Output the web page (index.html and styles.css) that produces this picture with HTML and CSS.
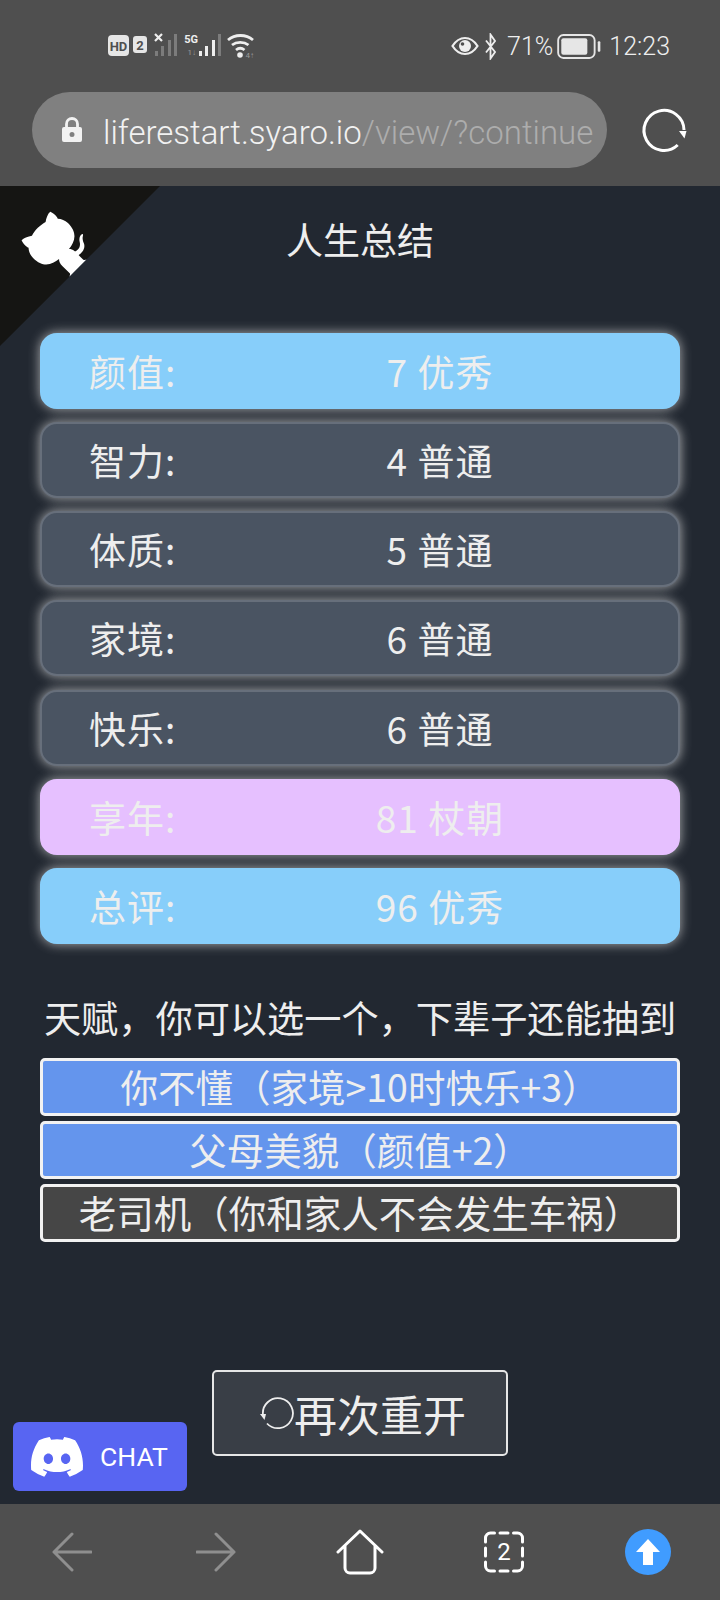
FILE: index.html
```html
<!DOCTYPE html>
<html>
<head>
    <meta name="viewport" content="width=device-width, initial-scale=1">
    <title>人生重开模拟器</title>
    <link rel="stylesheet" href="styles.css">
</head>
<body>
    <header class="browser-top">
        <div class="status-bar">
            <svg class="status-left" width="150" height="30" viewBox="0 0 150 30">
                <rect x="0" y="4" width="21" height="21" rx="4" fill="#e6e6e6"/>
                <text x="10.5" y="19.5" class="st-text hd">HD</text>
                <rect x="25" y="5" width="14" height="17" rx="3" fill="#e6e6e6"/>
                <text x="32" y="18.5" class="st-text hd">2</text>
                <path d="M47 3l7 7M54 3l-7 7" stroke="#eee" stroke-width="2.200"/>
                <g fill="#7c7c7c">
                    <rect x="47" y="20" width="3" height="5"/>
                    <rect x="53" y="15" width="3" height="10"/>
                    <rect x="60" y="9" width="3" height="16"/>
                    <rect x="66" y="3" width="3" height="22"/>
                </g>
                <text x="90" y="12" class="st-text fiveg">5G</text>
                <text x="88" y="24" class="st-text updown">1↓</text>
                <g fill="#eee">
                    <rect x="91" y="20" width="3" height="5"/>
                    <rect x="97" y="15" width="3" height="10"/>
                    <rect x="104" y="9" width="3" height="16"/>
                </g>
                <rect x="110" y="3" width="3" height="22" fill="#7c7c7c"/>
                <path d="M120 9c7-6 18-6 25 0M124 14c4.500-3.500 12-3.500 16.500 0M128 19c2.500-2 6-2 8.500 0" fill="none" stroke="#eee" stroke-width="2.800"/>
                <circle cx="132" cy="24" r="2.800" fill="#eee"/>
                <text x="146" y="27" class="st-text updown">4↑</text>
            </svg>
            <div class="status-right">
                <svg width="28" height="20" viewBox="0 0 28 20">
                    <path d="M1.500 10C5 4.500 9 2 14 2s9 2.500 12.500 8C23 15.500 19 18 14 18S5 15.500 1.500 10z" fill="none" stroke="#eee" stroke-width="2.200"/>
                    <circle cx="14" cy="10" r="6" fill="#eee"/>
                    <circle cx="11.500" cy="8" r="1.800" fill="#4f4f4f"/>
                </svg>
                <svg class="bt" width="11" height="27" viewBox="0 0 11 27">
                    <path d="M1 7.500l9 11.500-4.500 6.500V1.500L10 8 1 19.500" fill="none" stroke="#eee" stroke-width="1.800"/>
                </svg>
                <span class="pct">71%</span>
                <svg class="battery" width="44" height="25" viewBox="0 0 42 24">
                    <rect x="1" y="1" width="35" height="22" rx="5" fill="none" stroke="#e6e6e6" stroke-width="1.800"/>
                    <rect x="4" y="4" width="25" height="16" rx="2" fill="#e6e6e6"/>
                    <rect x="39" y="7" width="2.500" height="10" rx="1" fill="#e6e6e6"/>
                </svg>
                <span class="clock">12:23</span>
            </div>
        </div>
        <div class="url-row">
            <div class="url-pill">
                <svg width="22" height="28" viewBox="0 0 22 28">
                    <path d="M5.500 12V8a5.500 5.500 0 0 1 11 0v4" fill="none" stroke="#f2f2f2" stroke-width="2.800"/>
                    <path d="M3 11h16a2 2 0 0 1 2 2v11a2 2 0 0 1-2 2H3a2 2 0 0 1-2-2V13a2 2 0 0 1 2-2zm8 5a2.500 2.500 0 1 0 0 5 2.500 2.500 0 0 0 0-5z" fill="#f2f2f2" fill-rule="evenodd"/>
                </svg>
                <div class="url-text"><span class="url-host">liferestart.syaro.io</span><span class="url-path">/view/?continue</span></div>
            </div>
            <svg class="reload" width="48" height="48" viewBox="0 0 48 48">
                <path d="M37.700 39A20 20 0 1 1 44 24" fill="none" stroke="#fff" stroke-width="3"/>
                <path d="M39 25h7.500l-2 7.500z" fill="#fff"/>
            </svg>
        </div>
    </header>

    <main class="page">
        <a class="github-corner" href="#" aria-label="GitHub">
            <svg width="160" height="160" viewBox="0 0 250 250">
                <g transform="translate(250 0) scale(-1 1)">
                    <path d="M0,0 L115,115 L130,115 L142,142 L250,250 L250,0 Z" fill="#151513"/>
                    <path d="M128.3,109.0 C113.8,99.7 119.0,89.6 119.0,89.6 C122.0,82.7 120.5,78.6 120.5,78.6 C119.2,72.0 123.4,76.3 123.4,76.3 C127.3,80.9 125.5,87.3 125.5,87.3 C122.9,97.6 130.6,101.9 134.4,103.2" fill="#fff"/>
                    <path d="M115.0,115.0 C114.9,115.1 118.7,116.5 119.8,115.4 L133.7,101.6 C136.9,99.2 139.9,98.4 142.2,98.6 C133.8,88.0 127.5,74.4 143.8,58.0 C148.5,53.4 154.0,51.2 159.7,51.0 C160.3,49.4 163.2,43.6 171.4,40.1 C171.4,40.1 176.1,42.5 178.8,56.2 C183.1,58.6 187.2,61.8 190.9,65.4 C194.5,69.0 197.7,73.2 200.1,77.6 C213.8,80.2 216.3,84.9 216.3,84.9 C212.7,93.1 206.9,96.0 205.4,96.6 C205.1,102.4 203.0,107.8 198.3,112.5 C181.9,128.9 168.3,122.5 157.7,114.1 C157.9,116.9 156.7,120.9 152.7,124.9 L141.0,136.5 C139.8,137.7 141.6,141.9 141.8,141.8 Z" fill="#fff"/>
                </g>
            </svg>
        </a>

        <h1 class="title">人生总结</h1>

        <ul class="stats">
            <li class="stat stat-blue"><span class="stat-label">颜值:</span><span class="stat-value">7 优秀</span></li>
            <li class="stat"><span class="stat-label">智力:</span><span class="stat-value">4 普通</span></li>
            <li class="stat"><span class="stat-label">体质:</span><span class="stat-value">5 普通</span></li>
            <li class="stat"><span class="stat-label">家境:</span><span class="stat-value">6 普通</span></li>
            <li class="stat"><span class="stat-label">快乐:</span><span class="stat-value">6 普通</span></li>
            <li class="stat stat-pink"><span class="stat-label">享年:</span><span class="stat-value">81 杖朝</span></li>
            <li class="stat stat-blue"><span class="stat-label">总评:</span><span class="stat-value">96 优秀</span></li>
        </ul>

        <p class="talent-title">天赋，你可以选一个，下辈子还能抽到</p>

        <ul class="talents">
            <li class="talent talent-on">你不懂（家境&gt;10时快乐+3）</li>
            <li class="talent talent-on">父母美貌（颜值+2）</li>
            <li class="talent">老司机（你和家人不会发生车祸）</li>
        </ul>

        <button class="restart" type="button">
            <svg width="34" height="34" viewBox="0 0 34 34">
                <path d="M7 27.500A15 15 0 1 0 3 19" fill="none" stroke="#eee" stroke-width="1.800"/>
                <path d="M0 18h6l-1.500 6z" fill="#eee"/>
            </svg>
            <span>再次重开</span>
        </button>

        <a class="chat" href="#">
            <svg width="52" height="40" viewBox="0 0 16 12.300">
                <path transform="translate(0 -1.900)" fill="#fff" d="M13.545 2.907a13.227 13.227 0 0 0-3.257-1.011.05.05 0 0 0-.052.025c-.141.25-.297.577-.406.833a12.19 12.19 0 0 0-3.658 0 8.258 8.258 0 0 0-.412-.833.051.051 0 0 0-.052-.025c-1.125.194-2.22.534-3.257 1.011a.041.041 0 0 0-.021.018C.356 6.024-.213 9.047.066 12.032c.001.014.01.028.021.037a13.276 13.276 0 0 0 3.995 2.02.05.05 0 0 0 .056-.019c.308-.42.582-.863.818-1.329a.05.05 0 0 0-.01-.059.051.051 0 0 0-.018-.011 8.875 8.875 0 0 1-1.248-.595.05.05 0 0 1-.02-.066.051.051 0 0 1 .015-.019c.084-.063.168-.129.248-.195a.05.05 0 0 1 .051-.007c2.619 1.196 5.454 1.196 8.041 0a.052.052 0 0 1 .053.007c.08.066.164.132.248.195a.051.051 0 0 1-.004.085 8.254 8.254 0 0 1-1.249.594.05.05 0 0 0-.03.03.052.052 0 0 0 .003.041c.24.465.515.909.817 1.329a.05.05 0 0 0 .056.019 13.235 13.235 0 0 0 4.001-2.02.049.049 0 0 0 .021-.037c.334-3.451-.559-6.449-2.366-9.106a.034.034 0 0 0-.02-.019Zm-8.198 7.307c-.789 0-1.438-.724-1.438-1.612 0-.889.637-1.613 1.438-1.613.807 0 1.45.73 1.438 1.613 0 .888-.637 1.612-1.438 1.612Zm5.316 0c-.788 0-1.438-.724-1.438-1.612 0-.889.637-1.613 1.438-1.613.807 0 1.451.73 1.438 1.613 0 .888-.631 1.612-1.438 1.612Z"/>
            </svg>
            <span>CHAT</span>
        </a>
    </main>

    <nav class="bottom-nav">
        <svg width="40" height="40" viewBox="0 0 40 40">
            <path d="M20 2 2 20l18 18M2 20h37" fill="none" stroke="#8f8f8f" stroke-width="3" stroke-linecap="round" stroke-linejoin="round"/>
        </svg>
        <svg width="40" height="40" viewBox="0 0 40 40">
            <path d="M20 2l18 18-18 18M38 20H1" fill="none" stroke="#8f8f8f" stroke-width="3" stroke-linecap="round" stroke-linejoin="round"/>
        </svg>
        <svg width="48" height="46" viewBox="0 0 48 46">
            <path d="M2 23 24 2l22 21M9 17v22a5 5 0 0 0 5 5h20a5 5 0 0 0 5-5V17" fill="none" stroke="#fff" stroke-width="3" stroke-linecap="round" stroke-linejoin="round"/>
        </svg>
        <svg width="42" height="42" viewBox="0 0 42 42">
            <path d="M2.500 11V7a5 5 0 0 1 5-5h4M30.500 2h4a5 5 0 0 1 5 5v4M39.500 31v4a5 5 0 0 1-5 5h-4M11.500 40h-4a5 5 0 0 1-5-5v-4M17 2h8M17 40h8M2.500 17v8M39.500 17v8" fill="none" stroke="#fff" stroke-width="3" stroke-linecap="round"/>
            <text x="21" y="29" class="tab-count">2</text>
        </svg>
        <svg width="46" height="46" viewBox="0 0 46 46">
            <circle cx="23" cy="23" r="23" fill="#409cff"/>
            <path d="M23 10 35 23h-7v13H18V23h-7z" fill="#fff"/>
        </svg>
    </nav>
</body>
</html>
```

FILE: styles.css
```css
* {
    box-sizing: border-box;
}

body {
    margin: 0;
    width: 720px;
    height: 1600px;
    overflow: hidden;
    display: flex;
    flex-direction: column;
    background-color: #222831;
    color: #eeeeee;
    font-family: "Noto Sans CJK SC", "Noto Sans", sans-serif;
}

ul {
    list-style: none;
    margin: 0;
    padding: 0;
}

/* browser chrome */
.browser-top {
    height: 186px;
    background-color: #4f4f4f;
}

.status-bar {
    height: 92px;
    padding: 0 50px 0 108px;
    display: flex;
    justify-content: space-between;
    align-items: center;
}

.status-left {
    flex: none;
}

.st-text {
    font-family: Roboto, sans-serif;
    text-anchor: middle;
    fill: #eeeeee;
}

.st-text.hd {
    font-size: 13px;
    font-weight: 700;
    fill: #4f4f4f;
}

.st-text.fiveg {
    font-size: 11px;
    font-weight: 700;
    text-anchor: end;
}

.st-text.updown {
    font-size: 8px;
    text-anchor: end;
    fill: #9a9a9a;
}

.status-right {
    display: flex;
    align-items: center;
    font-family: Roboto, sans-serif;
    font-weight: 300;
    font-size: 25px;
    color: #eeeeee;
}

.bt {
    margin-left: 6px;
}

.pct {
    margin-left: 11px;
}

.battery {
    margin-left: 4px;
}

.clock {
    margin-left: 8px;
}

.url-row {
    display: flex;
    align-items: center;
    padding-left: 32px;
}

.url-pill {
    width: 575px;
    height: 76px;
    border-radius: 38px;
    background-color: #808080;
    padding: 0 10px 0 29px;
    display: flex;
    align-items: center;
    gap: 20px;
}

.url-pill svg {
    flex: none;
}

.url-text {
    padding-top: 4px;
    white-space: nowrap;
    overflow: hidden;
    font-family: Roboto, sans-serif;
    font-weight: 300;
    font-size: 33px;
}

.url-host {
    color: #f2f2f2;
}

.url-path {
    color: #adadad;
}

.reload {
    margin-left: 33px;
}

/* page */
.page {
    position: relative;
    height: 1318px;
    padding: 0 40px;
}

.github-corner {
    position: absolute;
    top: 0;
    left: 0;
    line-height: 0;
}

.title {
    margin: 0;
    height: 146.500px;
    padding-top: 23px;
    line-height: 60px;
    text-align: center;
    font-size: 37px;
    font-weight: 400;
}

.stats {
    display: flex;
    flex-direction: column;
    gap: 13.300px;
}

.stat {
    height: 76px;
    padding-left: 47px;
    border-radius: 17px;
    border: 2px solid rgba(255, 255, 255, 0.16);
    background-color: #4a5462;
    box-shadow: 0 0 12px rgba(220, 220, 220, 0.75);
    display: grid;
    grid-template-columns: 113px 1fr;
    align-items: center;
    font-size: 37px;
    letter-spacing: 1px;
    line-height: 50px;
}

.stat-value {
    text-align: center;
}

.stat-blue {
    background-color: #87cefa;
    border-color: #87cefa;
}

.stat-pink {
    background-color: #e6c0ff;
    border-color: #e6c0ff;
}

.talent-title {
    margin: 0;
    padding-top: 46.500px;
    height: 113.500px;
    line-height: 52px;
    font-size: 37.200px;
    text-align: center;
    white-space: nowrap;
}

.talents {
    display: flex;
    flex-direction: column;
    gap: 5px;
}

.talent {
    height: 58px;
    border: 3.500px solid #f2f2f2;
    border-radius: 5px;
    background-color: #464646;
    text-align: center;
    font-size: 37.500px;
    line-height: 49px;
    white-space: nowrap;
}

.talent-on {
    background-color: #6495ed;
}

.restart {
    display: flex;
    align-items: center;
    justify-content: center;
    width: 296px;
    height: 86px;
    margin: 128px auto 0;
    padding: 0 0 0 6px;
    border: 2px solid #e6e6e6;
    border-radius: 5px;
    background-color: #393e46;
    color: #eeeeee;
    font-family: inherit;
    font-size: 43px;
}

.chat {
    position: absolute;
    left: 13px;
    bottom: 13px;
    width: 174px;
    height: 69px;
    padding-left: 18px;
    border-radius: 6px;
    background-color: #5865f2;
    color: #ffffff;
    text-decoration: none;
    display: flex;
    align-items: center;
    gap: 17px;
    font-family: Roboto, sans-serif;
    font-size: 26.500px;
}

/* bottom toolbar */
.bottom-nav {
    height: 96px;
    background-color: #4f4f4f;
    display: grid;
    grid-template-columns: repeat(5, 144px);
    justify-items: center;
    align-items: center;
}

.tab-count {
    font-family: Roboto, sans-serif;
    font-size: 24px;
    text-anchor: middle;
    fill: #ffffff;
}
```
